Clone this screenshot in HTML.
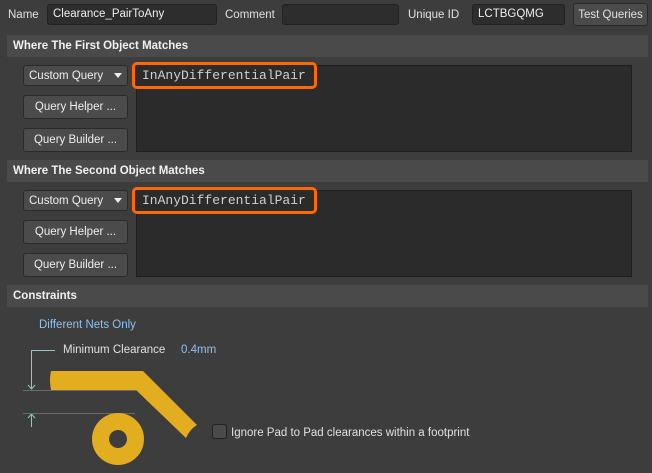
<!DOCTYPE html>
<html><head><style>
body{margin:0;width:652px;height:473px;background:#3d3d3d;font-family:"Liberation Sans",sans-serif;font-size:11.5px;color:#e0e0e0;position:relative;overflow:hidden}
.a{position:absolute}
.inp{position:absolute;background:#2d2d2d;border:1px solid #222;border-radius:3px;box-sizing:border-box;padding:3px 5px;color:#eee}
.hdr{position:absolute;left:7px;width:641px;height:22px;background:#4a4a4a;font-weight:bold;font-size:11.5px;line-height:22px;padding-left:6px;box-sizing:border-box;color:#f0f0f0}
.btn{position:absolute;left:23px;width:105px;background:#4b4b4b;border:1px solid #2a2a2a;border-radius:3px;box-sizing:border-box;text-align:center;color:#eee}
.ta{position:absolute;left:136px;width:496px;height:87px;background:#2b2b2b;border:1px solid #1f1f1f;box-sizing:border-box}
.or{position:absolute;left:132px;width:185px;height:27px;border:3px solid #ff6a00;border-radius:5px;box-sizing:border-box;background:#2b2b2b;font-family:"Liberation Mono",monospace;font-size:13px;color:#d0d0d0;padding:3px 0 0 7px}
.tri{position:absolute;right:5px;top:7px;width:0;height:0;border-left:4px solid transparent;border-right:4px solid transparent;border-top:5px solid #eee}
</style></head><body>
<div class="a" style="left:8px;top:9px">Name</div>
<div class="inp" style="left:47px;top:4px;width:170px;height:21px">Clearance_PairToAny</div>
<div class="a" style="left:225px;top:9px">Comment</div>
<div class="inp" style="left:282px;top:4px;width:117px;height:21px"></div>
<div class="a" style="left:408px;top:9px">Unique ID</div>
<div class="inp" style="left:472px;top:4px;width:93px;height:21px">LCTBGQMG</div>
<div class="a" style="left:573px;top:3px;width:75px;height:23px;background:#4b4b4b;border:1px solid #2a2a2a;border-radius:3px;box-sizing:border-box;text-align:center;line-height:23px">Test Queries</div>

<div class="hdr" style="top:35px">Where The First Object Matches</div>
<div class="btn" style="top:65px;height:21px;text-align:left;padding-left:5px;line-height:20px">Custom Query<div class="tri"></div></div>
<div class="btn" style="top:95px;height:24px;line-height:23px">Query Helper ...</div>
<div class="btn" style="top:128px;height:24px;line-height:23px">Query Builder ...</div>
<div class="ta" style="top:65px"></div>
<div class="or" style="top:62px">InAnyDifferentialPair</div>

<div class="hdr" style="top:160px">Where The Second Object Matches</div>
<div class="btn" style="top:190px;height:21px;text-align:left;padding-left:5px;line-height:20px">Custom Query<div class="tri"></div></div>
<div class="btn" style="top:220px;height:24px;line-height:23px">Query Helper ...</div>
<div class="btn" style="top:253px;height:24px;line-height:23px">Query Builder ...</div>
<div class="ta" style="top:190px"></div>
<div class="or" style="top:187px">InAnyDifferentialPair</div>

<div class="hdr" style="top:285px">Constraints</div>
<div class="a" style="left:39px;top:319px;color:#8fc0f0">Different Nets Only</div>
<div class="a" style="left:63px;top:344px">Minimum Clearance</div>
<div class="a" style="left:181px;top:344px;color:#8fc0f0">0.4mm</div>
<svg class="a" style="left:0;top:340px" width="220" height="133">
<g stroke="#8fc8c0" fill="none" stroke-width="1">
<path d="M55 10.5H31.5V49M28 45l3.5 4 3.5-4"/>
<path d="M31.5 87V74M28 78l3.5-4 3.5 4"/>
</g>
<path d="M23 50.5H136M23 73.5H135" stroke="#6a6a6a"/>
<path d="M51 31H143L197 85Q190 89 186 98L136 50H51Q49 40 51 31Z" fill="#e2ae20"/>
<circle cx="118" cy="99" r="26" fill="#e2ae20"/><circle cx="118" cy="99" r="9" fill="#3d3d3d"/>
</svg>
<div class="a" style="left:212px;top:424px;width:15px;height:15px;background:#4a4a4a;border:1px solid #222;border-radius:3px;box-sizing:border-box"></div>
<div class="a" style="left:231px;top:427px">Ignore Pad to Pad clearances within a footprint</div>
</body></html>
